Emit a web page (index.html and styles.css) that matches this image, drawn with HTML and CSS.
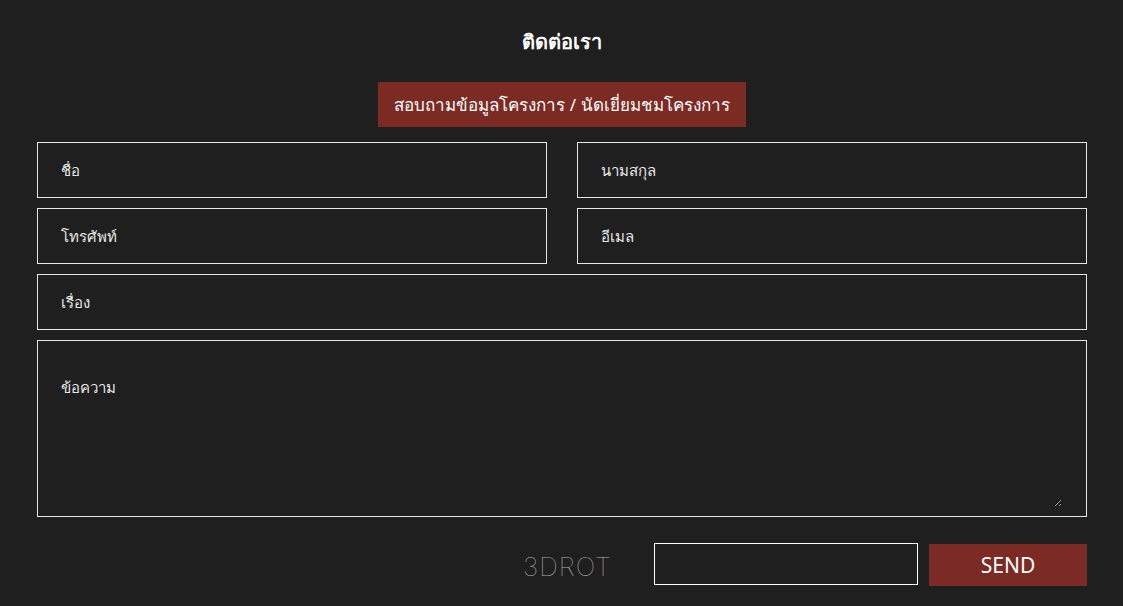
FILE: index.html
```html
<!DOCTYPE html>
<html lang="th">
<head>
<meta charset="utf-8">
<title>ติดต่อเรา</title>
<link rel="stylesheet" href="styles.css">
</head>
<body>
<div class="page">
  <h1 class="title">ติดต่อเรา</h1>
  <div class="tab-wrap">
    <span class="tab">สอบถามข้อมูลโครงการ / นัดเยี่ยมชมโครงการ</span>
  </div>
  <form class="form">
    <input class="field" type="text" placeholder="ชื่อ">
    <input class="field" type="text" placeholder="นามสกุล">
    <input class="field" type="text" placeholder="โทรศัพท์">
    <input class="field" type="text" placeholder="อีเมล">
    <input class="field full" type="text" placeholder="เรื่อง">
    <div class="area-box full">
      <textarea class="area" placeholder="ข้อความ"></textarea>
    </div>
    <div class="actions full">
      <span class="captcha">3DROT</span>
      <input class="captcha-input" type="text">
      <button class="send" type="button">SEND</button>
    </div>
  </form>
</div>
</body>
</html>
```

FILE: styles.css
```css
html, body {
  margin: 0;
  background: #1f1f1f;
}
body {
  font-family: "Noto Sans", "Open Sans", sans-serif;
  color: #fff;
}
.page {
  padding: 26px 36px 0 37px;
}
.title {
  margin: 0;
  text-align: center;
  font-size: 20px;
  font-weight: 700;
  line-height: 32px;
  color: #fff;
}
.tab-wrap {
  margin-top: 24px;
  text-align: center;
}
.tab {
  display: inline-block;
  background: #7b2b23;
  color: #fff;
  font-size: 17px;
  line-height: 45px;
  height: 45px;
  padding: 0 16px;
}
.form {
  margin-top: 15px;
  display: grid;
  grid-template-columns: 1fr 1fr;
  column-gap: 30px;
  row-gap: 10px;
}
.full {
  grid-column: 1 / -1;
}
.field {
  box-sizing: border-box;
  height: 56px;
  background: transparent;
  border: 1px solid #e6e6e6;
  color: #fff;
  font-family: "Noto Sans", "Open Sans", sans-serif;
  font-size: 15px;
  padding: 0 23px;
  outline: none;
  margin: 0;
}
.field::placeholder,
.area::placeholder {
  color: #e8e8e8;
  opacity: 1;
}
.area-box {
  box-sizing: border-box;
  height: 177px;
  border: 1px solid #e6e6e6;
  padding: 0 24px 9px 0;
  display: flex;
}
.area {
  flex: 1;
  box-sizing: border-box;
  height: 100%;
  background: transparent;
  border: none;
  color: #fff;
  font-family: "Noto Sans", "Open Sans", sans-serif;
  font-size: 15px;
  padding: 35px 23px 0;
  resize: vertical;
  outline: none;
  margin: 0;
}
.actions {
  display: flex;
  justify-content: flex-end;
  align-items: center;
  margin-top: 15px;
}
.captcha {
  font-family: "Inter", "Liberation Sans", sans-serif;
  font-weight: 100;
  font-size: 26px;
  letter-spacing: 1px;
  color: #b0b0b0;
  margin-right: 42px;
  padding-top: 4px;
}
.captcha-input {
  box-sizing: border-box;
  width: 264px;
  height: 42px;
  background: transparent;
  border: 1px solid #fff;
  margin: 0;
  color: #fff;
  outline: none;
}
.send {
  box-sizing: border-box;
  width: 158px;
  height: 42px;
  margin-left: 11px;
  margin-top: 2px;
  background: #7b2b23;
  border: none;
  color: #fff;
  font-family: "Noto Sans", "Open Sans", sans-serif;
  font-size: 21px;
  cursor: pointer;
}
```
